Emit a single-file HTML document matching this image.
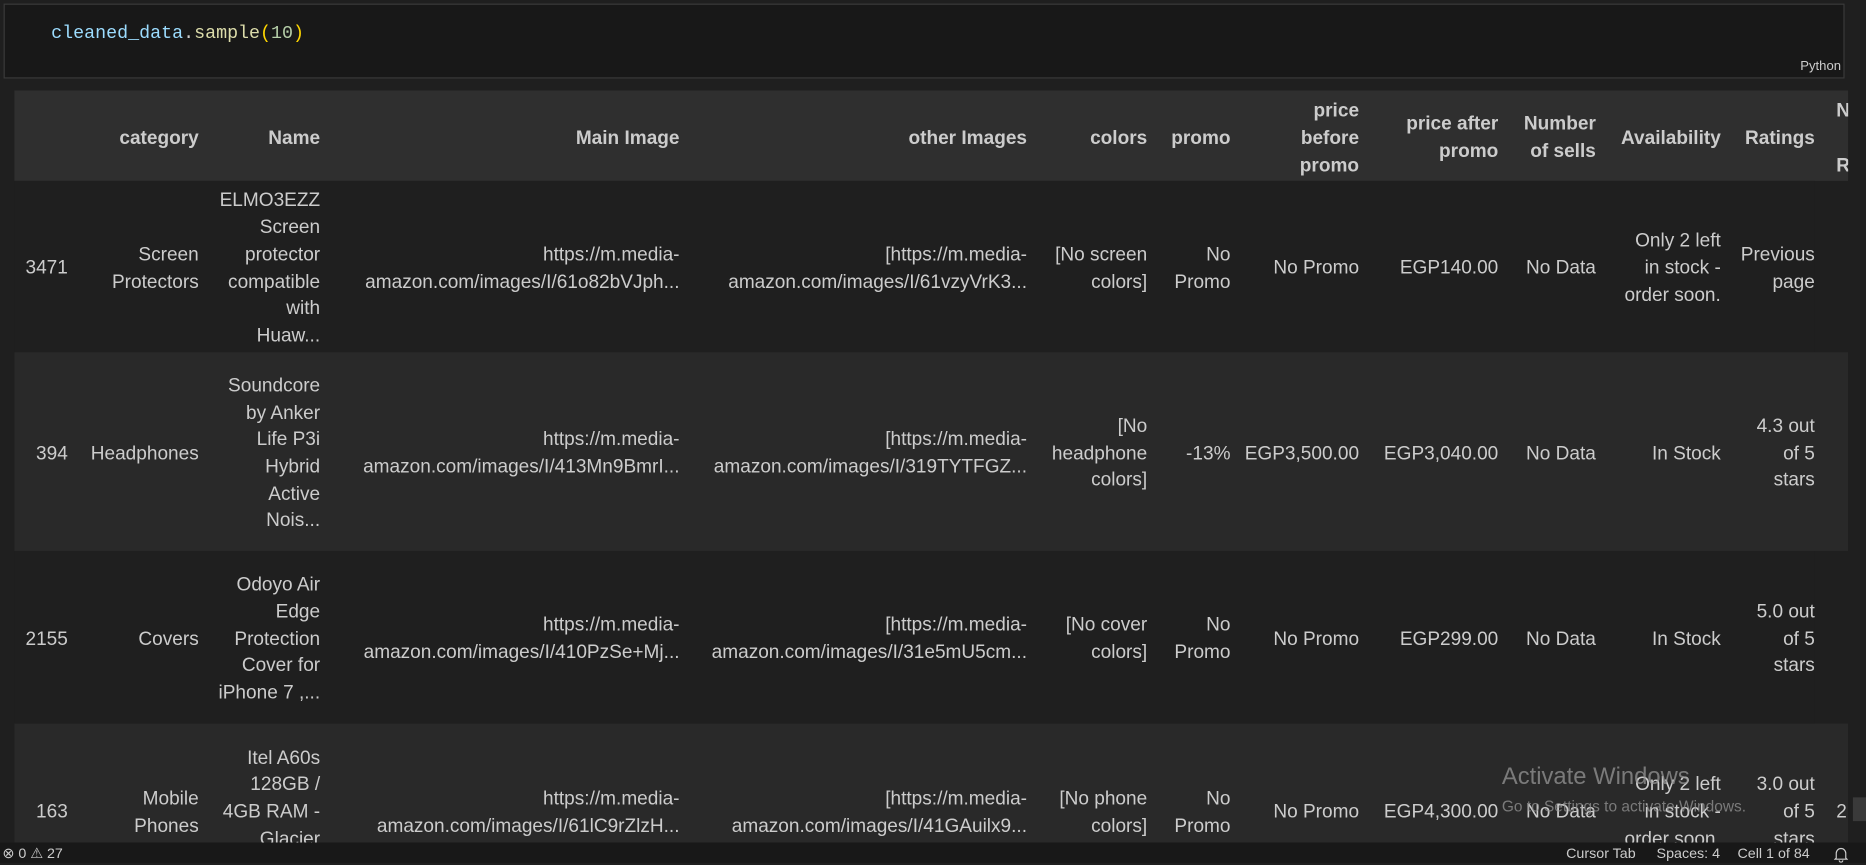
<!DOCTYPE html>
<html><head><meta charset="utf-8">
<style>
html,body{margin:0;padding:0;background:#1f1f1f;width:1866px;height:863px;overflow:hidden}
#w{position:absolute;left:0;top:0;width:1568px;height:725px;transform:scale(1.19005);transform-origin:0 0;font-family:"Liberation Sans",sans-serif;color:#cccccc}
.cellbox{position:absolute;left:3px;top:3px;width:1545px;height:61px;background:#181818;border:1px solid #3a3a3a}
.code{position:absolute;left:39px;top:15px;font-family:"Liberation Mono",monospace;font-size:15.4px}
.py{position:absolute;right:2px;bottom:3px;font-size:11px;color:#cccccc}
.tbl{position:absolute;left:12px;top:76px;width:1541px;height:632px;overflow:hidden}
.row{position:absolute;left:0;width:1513px}
.c{position:absolute;top:0;height:100%;box-sizing:border-box;padding-top:5px;display:flex;flex-direction:column;justify-content:center;text-align:right;font-size:16px;line-height:22.7px;white-space:nowrap;color:#cccccc}
.h .c{font-weight:bold;line-height:23px;padding-top:4px}
.sb{position:absolute;left:0;top:708px;width:1568px;height:17px;background:#181818;font-size:12px;color:#cccccc;line-height:19px}
.wm{position:absolute;color:rgba(150,150,150,0.75)}
</style></head><body><div id="w">
<div class="cellbox">
<div class="code"><span style="color:#9cdcfe">cleaned_data</span><span style="color:#cccccc">.</span><span style="color:#dcdcaa">sample</span><span style="color:#ffd700">(</span><span style="color:#b5cea8">10</span><span style="color:#ffd700">)</span></div>
<div class="py">Python</div>
</div>
<div class="tbl">
<div class="row h" style="top:0;height:76px;background:#2f2f2f;width:1541px">
<div class="c" style="right:1484px;width:40px"></div>
<div class="c" style="right:1386px;width:100px">category</div>
<div class="c" style="right:1284px;width:100px">Name</div>
<div class="c" style="right:982px;width:200px">Main Image</div>
<div class="c" style="right:690px;width:200px">other Images</div>
<div class="c" style="right:589px;width:90px">colors</div>
<div class="c" style="right:519px;width:60px">promo</div>
<div class="c" style="right:411px;width:90px">price<br>before<br>promo</div>
<div class="c" style="right:294px;width:110px">price after<br>promo</div>
<div class="c" style="right:212px;width:80px">Number<br>of sells</div>
<div class="c" style="right:107px;width:100px">Availability</div>
<div class="c" style="right:28px;width:80px">Ratings</div>
<div class="c" style="left:1531px;width:40px;text-align:left">N<br>&nbsp;<br>R</div>
</div>
<div class="row" style="top:76px;height:144px;background:#1f1f1f">
<div class="c" style="left:8px;width:37px">3471</div>
<div class="c" style="right:1358px;width:100px">Screen<br>Protectors</div>
<div class="c" style="right:1256px;width:100px">ELMO3EZZ<br>Screen<br>protector<br>compatible<br>with<br>Huaw...</div>
<div class="c" style="right:954px;width:290px">https://m.media-<br>amazon.com/images/I/61o82bVJph...</div>
<div class="c" style="right:662px;width:290px">[https://m.media-<br>amazon.com/images/I/61vzyVrK3...</div>
<div class="c" style="right:561px;width:90px">[No screen<br>colors]</div>
<div class="c" style="right:491px;width:60px">No<br>Promo</div>
<div class="c" style="right:383px;width:100px">No Promo</div>
<div class="c" style="right:266px;width:110px">EGP140.00</div>
<div class="c" style="right:184px;width:80px">No Data</div>
<div class="c" style="right:79px;width:100px">Only 2 left<br>in stock -<br>order soon.</div>
<div class="c" style="right:0px;width:80px">Previous<br>page</div>
</div>
<div class="row" style="top:220px;height:167px;background:#292929;width:1541px">
<div class="c" style="left:8px;width:37px">394</div>
<div class="c" style="right:1386px;width:100px">Headphones</div>
<div class="c" style="right:1284px;width:100px">Soundcore<br>by Anker<br>Life P3i<br>Hybrid<br>Active<br>Nois...</div>
<div class="c" style="right:982px;width:290px">https://m.media-<br>amazon.com/images/I/413Mn9BmrI...</div>
<div class="c" style="right:690px;width:290px">[https://m.media-<br>amazon.com/images/I/319TYTFGZ...</div>
<div class="c" style="right:589px;width:90px">[No<br>headphone<br>colors]</div>
<div class="c" style="right:519px;width:60px">-13%</div>
<div class="c" style="right:411px;width:100px">EGP3,500.00</div>
<div class="c" style="right:294px;width:110px">EGP3,040.00</div>
<div class="c" style="right:212px;width:80px">No Data</div>
<div class="c" style="right:107px;width:100px">In Stock</div>
<div class="c" style="right:28px;width:80px">4.3 out<br>of 5<br>stars</div>
</div>
<div class="row" style="top:387px;height:145px;background:#1f1f1f">
<div class="c" style="left:8px;width:37px">2155</div>
<div class="c" style="right:1358px;width:100px">Covers</div>
<div class="c" style="right:1256px;width:100px">Odoyo Air<br>Edge<br>Protection<br>Cover for<br>iPhone 7 ,...</div>
<div class="c" style="right:954px;width:290px">https://m.media-<br>amazon.com/images/I/410PzSe+Mj...</div>
<div class="c" style="right:662px;width:290px">[https://m.media-<br>amazon.com/images/I/31e5mU5cm...</div>
<div class="c" style="right:561px;width:90px">[No cover<br>colors]</div>
<div class="c" style="right:491px;width:60px">No<br>Promo</div>
<div class="c" style="right:383px;width:100px">No Promo</div>
<div class="c" style="right:266px;width:110px">EGP299.00</div>
<div class="c" style="right:184px;width:80px">No Data</div>
<div class="c" style="right:79px;width:100px">In Stock</div>
<div class="c" style="right:0px;width:80px">5.0 out<br>of 5<br>stars</div>
</div>
<div class="row" style="top:532px;height:146px;background:#292929;width:1541px">
<div class="c" style="left:8px;width:37px">163</div>
<div class="c" style="right:1386px;width:100px">Mobile<br>Phones</div>
<div class="c" style="right:1284px;width:100px">Itel A60s<br>128GB /<br>4GB RAM -<br>Glacier<br>Blue...</div>
<div class="c" style="right:982px;width:290px">https://m.media-<br>amazon.com/images/I/61lC9rZlzH...</div>
<div class="c" style="right:690px;width:290px">[https://m.media-<br>amazon.com/images/I/41GAuilx9...</div>
<div class="c" style="right:589px;width:90px">[No phone<br>colors]</div>
<div class="c" style="right:519px;width:60px">No<br>Promo</div>
<div class="c" style="right:411px;width:100px">No Promo</div>
<div class="c" style="right:294px;width:110px">EGP4,300.00</div>
<div class="c" style="right:212px;width:80px">No Data</div>
<div class="c" style="right:107px;width:100px">Only 2 left<br>in stock -<br>order soon.</div>
<div class="c" style="right:28px;width:80px">3.0 out<br>of 5<br>stars</div>
<div class="c" style="left:1531px;width:20px;text-align:left">2</div>
</div>
</div>
<div style="position:absolute;left:1557px;top:670px;width:11px;height:20px;background:#3a3a3a"></div>
<div class="wm" style="left:1262px;top:642px;font-size:20px">Activate Windows</div>
<div class="wm" style="left:1262px;top:670px;font-size:13px">Go to Settings to activate Windows.</div>
<div class="sb">
<span style="position:absolute;left:2px">&#x2297; 0 &#x26A0; 27</span>
<span style="position:absolute;left:1316px">Cursor Tab</span>
<span style="position:absolute;left:1392px">Spaces: 4</span>
<span style="position:absolute;left:1460px">Cell 1 of 84</span>
<span style="position:absolute;left:1541px">
<svg width="12" height="14" viewBox="0 0 12 14" style="vertical-align:middle"><path d="M2 10V6a4 4 0 0 1 8 0v4l1 1H1z M4.5 12a1.5 1.5 0 0 0 3 0" fill="none" stroke="#ccc" stroke-width="1"/></svg></span>
</div>
</div></body></html>
